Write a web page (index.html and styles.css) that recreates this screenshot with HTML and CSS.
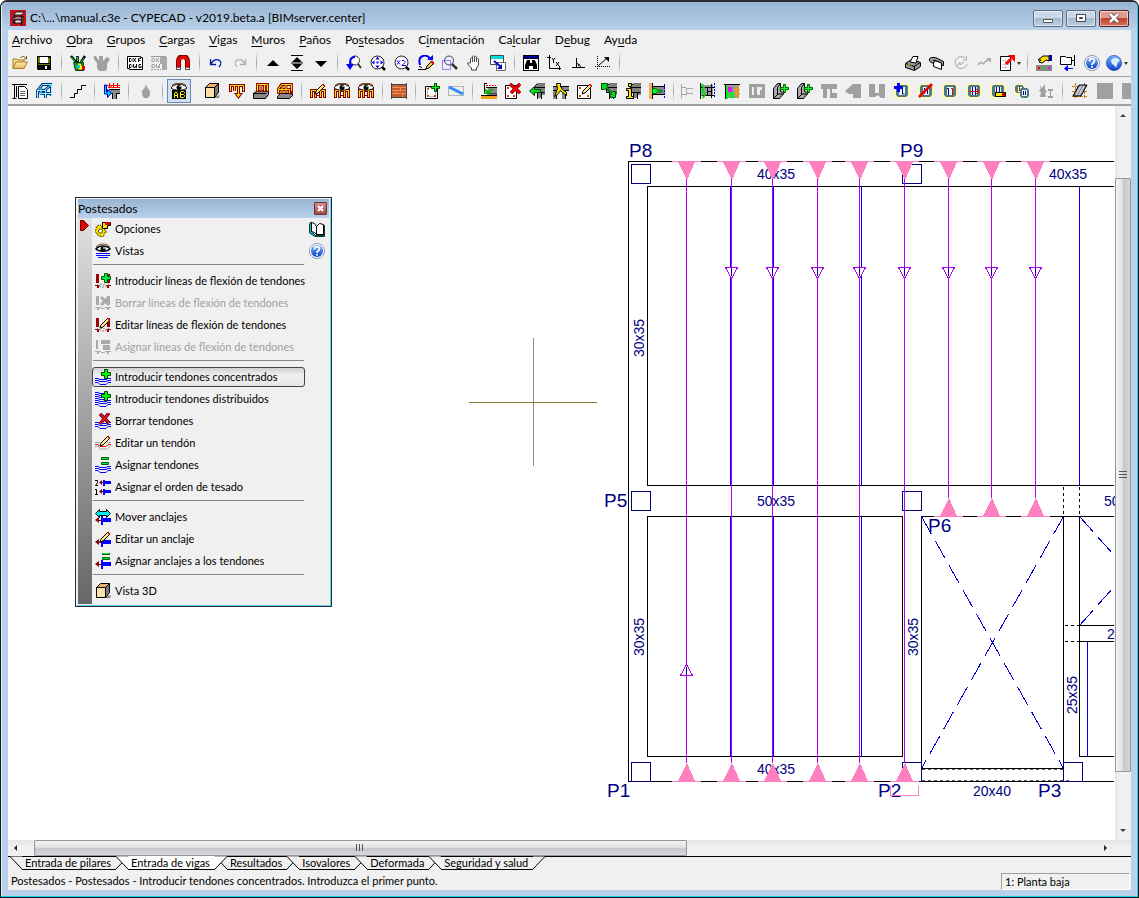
FILE: index.html
```html
<!DOCTYPE html>
<html lang="es">
<head>
<meta charset="utf-8">
<title>CYPECAD - v2019.beta.a</title>
<link rel="stylesheet" href="styles.css">
</head>
<body>
<svg class="sprite" aria-hidden="true">
  <defs>
    <linearGradient id="gBlue" x1="0" y1="0" x2="0" y2="1"><stop offset="0" stop-color="#7db4ff"/><stop offset="1" stop-color="#0a3fc8"/></linearGradient>
    <linearGradient id="gFolder" x1="0" y1="0" x2="0" y2="1"><stop offset="0" stop-color="#fff0b8"/><stop offset="1" stop-color="#e6b450"/></linearGradient>
    <g id="plus"><path d="M10.500 .5h3v3h3v3h-3v3h-3v-3h-3v-3h3z" fill="#0f0" stroke="#004000"/></g>
    <g id="pen"><path d="M5 11l1-3 7-7 2 2-7 7z" fill="#ffe680" stroke="#000"/><path d="M12 1h2v1h1v2h-1z" fill="#d00"/></g>
    <g id="claws"><path d="M0 6h16v9h-3v-2h-1v2H9v-2H7v2H4v-2H3v2H0z" fill="#8b0000"/><path d="M1 7h14v7h-1V8h-3v6h-1V8H6v6H5V8H2v6H1z" fill="#ffdc00"/><path d="M3 9h1v4H3zM7 9h2v3H7zM12 9h1v4h-1z" fill="#f0f0f0"/></g>
    <g id="eye"><path d="M0 5C3 0 13 0 16 5 12 8 4 8 0 5z" fill="#fff" stroke="#000"/><path d="M1 3C4-.5 12-.5 15 3" fill="none" stroke="#7a4a28" stroke-width="1.500"/><circle cx="8" cy="4.500" r="2.500" fill="#000"/><path d="M8 3h2v1H8z" fill="#5cc"/></g>
    <g id="beam"><path d="M5 4l3-2h8v10h-4v3H8V9H5z" fill="#808080"/><path d="M5 4.500h11M5.500 4.500v5h10M8.500 10v6M12.500 10v6M5 4l3-3h8" fill="none" stroke="#000"/></g>
    <g id="waves" fill="none" stroke="#00f"><path d="M0 9.500h3l2 1h6l2-1h3M0 11.500h3l2 1h6l2-1h3M0 13.500h3l2 2h6l2-2h3"/></g>
    <g id="anchor"><path d="M6 7h2v2h8v4H8v3H6z" fill="#00f"/><path d="M3 11h3v1H3z" fill="#8b0000"/><path d="M4 8v6l-4-3z" fill="#8b0000"/></g>
    <g id="equal"><path d="M7.500 .5h7v2h-7zM7.500 5.500h7v2h-7z" fill="#0e4" stroke="#006010"/></g>
    <g id="posts"><path d="M1 1h3v9H1zM12 1h3v9h-3zM2 12h2v3H2zM12 12h2v3h-2z" fill="#900"/><path d="M0 12.500h5M11 12.500h5" stroke="#900"/><path d="M2 11l4 3h4l4-3M5 11l3 1 3-1" fill="none" stroke="#888" stroke-dasharray="2 1"/></g>
    <g id="slab"><path d="M0 1h5v-1h6v1h5v13h-5v2H5v-1H0z" fill="#fff8b0"/><path d="M3 2h10l1 2v8l-2 2H4l-2-2V4z" fill="#4c7c7c"/><path d="M5 4h6v8H5z" fill="#eef4f4"/></g>

    <symbol id="i-app" viewBox="0 0 16 16"><path d="M0 0h16v16H0z" fill="#c41420"/><path d="M4 5l2-3h8l-2 3zM2 9l3-2h9l-3 2zM3 13l2-3h9l-3 3z" fill="#ddd" stroke="#111" stroke-width=".8"/><path d="M4.500 5v3M11.500 5v3M4.500 10v4M11.500 10v5" stroke="#111" stroke-width="1.500"/></symbol>
    <symbol id="i-open" viewBox="0 0 16 16"><path d="M1 13V4h4l1 1h6v2" fill="#f6d98a" stroke="#a87a1c"/><path d="M1 13.500L4 7h11.500L12 13.500z" fill="url(#gFolder)" stroke="#a87a1c"/><path d="M8 3c2-2 4-2 6 0M14.500 1v3H12" fill="none" stroke="#806020"/></symbol>
    <symbol id="i-save" viewBox="0 0 16 16"><path d="M1 1h14v14H2l-1-1z" fill="#000"/><path d="M2 2h2v6H2zM12 3h2v5h-2z" fill="#7a7a00"/><path d="M4 2h8v6H4zM9 11h2v3H9z" fill="#fff"/><path d="M2 9h12v1H2z" fill="#7a7a00"/></symbol>
    <symbol id="i-tools" viewBox="0 0 16 16"><path d="M3.500 7.500h10v8h-8z" fill="#0b2" stroke="#043"/><path d="M7 8h4l3 7H8z" fill="#ff0" stroke="#000" stroke-width=".7"/><path d="M1 1l5 6M7.500 1v6M15 1l-4 6" fill="none" stroke="#000" stroke-width="2.500"/><path d="M1.500 2l4 5M7.500 2v4M14 3l-3 4" stroke="#0d3"/><path d="M7 10h3v3H7z" fill="#0cf"/><path d="M12 11h3v4h-3z" fill="#d00"/></symbol>
    <symbol id="i-tools-off" viewBox="0 0 16 16"><path d="M0 1h2l3 5V1h4v5l4-4 3 2-3 5v5l-2 2H5l-2-3V8L0 4z" fill="#a0a0a0"/></symbol>
    <symbol id="i-dxf" viewBox="0 0 16 16"><path d="M.5 1.500h13v1h2v12H2.500v-1h-2z" fill="#fff" stroke="#000"/><path d="M2.500 7V3.500H4l1 1v1l-1 1H2.500M6 3l3 4M9 3L6 7M11.500 7V3.500H14M12 5.500h1.500M2.500 13V9.500H4l1 1v1l-1 1H2.500M6.500 9v3l1 1 1-2 1 2V9M14 9.500h-2v3h2V11" fill="none" stroke="#000"/></symbol>
    <symbol id="i-dxf-off" viewBox="0 0 16 16"><path d="M1 3.500h2l1 1-1 2H1zM5 3l3 4M8 3L5 7M9.500 7V3.500H12M1 9.500h2l1 1-1 2H1zM5.500 9v3l1 1 1-2 1 2V9M0 1.500h15" fill="none" stroke="#999"/><path d="M9 2h7v13h-5V9H9z" fill="#a8a8a8"/><path d="M0 14.500h10" stroke="#999" stroke-dasharray="2 1"/></symbol>
    <symbol id="i-magnet" viewBox="0 0 16 16"><path d="M3.500 15V6c0-6 9-6 9 0v9" fill="none" stroke="#700" stroke-width="5"/><path d="M3.500 15V6c0-5 9-5 9 0v9" fill="none" stroke="#f00000" stroke-width="3"/><path d="M1.500 12.500h4v2h-4zM10.500 12.500h4v2h-4z" fill="#fff" stroke="#555"/></symbol>
    <symbol id="i-undo" viewBox="0 0 16 16"><path d="M2.500 4v5.500H8M3 9c2-5 7-5 9-3s0 5-1 6" fill="none" stroke="#0018a8" stroke-width="1.300"/></symbol>
    <symbol id="i-redo" viewBox="0 0 16 16"><path d="M13.500 4v5.500H8M13 9C11 4 6 4 4 6s0 5 1 6" fill="none" stroke="#b0b0b0" stroke-width="1.300"/></symbol>
    <symbol id="i-up" viewBox="0 0 16 16"><path d="M2 11h12L8 5z" fill="#000"/></symbol>
    <symbol id="i-updown" viewBox="0 0 16 16"><path d="M2 .5h12M2 15.500h12M2 8h12" stroke="#000"/><path d="M3 7h10L8 2zM3 9h10l-5 5z" fill="#000"/></symbol>
    <symbol id="i-down" viewBox="0 0 16 16"><path d="M2 6h12l-6 6z" fill="#000"/></symbol>
    <symbol id="i-zoomprev" viewBox="0 0 16 16"><circle cx="9" cy="5.500" r="4.500" fill="#fff" stroke="#333"/><path d="M12 9l3 4" stroke="#333" stroke-width="2"/><path d="M9 2C4 2 4 6 4 10" fill="none" stroke="#00f" stroke-width="2"/><path d="M0 9h8l-4 6z" fill="#00f"/></symbol>
    <symbol id="i-zoomall" viewBox="0 0 16 16"><circle cx="7.500" cy="7.500" r="6.500" fill="#fff" stroke="#222"/><path d="M12 12l3 3" stroke="#000" stroke-width="2.500"/><path d="M7.500 1.500l2 3h-4zM7.500 13.500l2-3h-4zM1.500 7.500l3-2v4zM13.500 7.500l-3-2v4z" fill="#00f"/><path d="M6.500 6.500h2v2h-2z" fill="#00f"/></symbol>
    <symbol id="i-zoomx2" viewBox="0 0 16 16"><circle cx="7.500" cy="7.500" r="6.500" fill="#fff" stroke="#222"/><path d="M12 12l3 3" stroke="#000" stroke-width="2.500"/><path d="M3 5.500l3 4M6 5.500l-3 4M8 5.500h2l1 1v1l-3 3h4" fill="none" stroke="#00f"/></symbol>
    <symbol id="i-redraw" viewBox="0 0 16 16"><path d="M2 10C-1 0 9-2 12 4" fill="none" stroke="#00f" stroke-width="2"/><path d="M9 5h6V0z" fill="#00f"/><path d="M0 14.500h8M1 11.500l3 1" stroke="#000"/><path d="M8 14l1-3 5-5 2 2-5 5z" fill="#fc3" stroke="#000"/><path d="M13 6l3 3" stroke="#d00" stroke-width="2"/></symbol>
    <symbol id="i-zoomwin" viewBox="0 0 16 16"><circle cx="7" cy="5.500" r="4.500" fill="#eef" stroke="#444"/><path d="M10 9l5 5" stroke="#333" stroke-width="2.500"/><path d="M.5 5.500h8v9h-8z" fill="none" stroke="#22f" stroke-dasharray="1 1"/></symbol>
    <symbol id="i-hand" viewBox="0 0 16 16"><path d="M4.500 8V3.500q1-1.500 2 0V7 1.500q1-1.500 2 0V7 2q1-1.500 2 0v5-3q1-1.500 2 0v6l-2 3v2h-5v-2L1.500 9q0-2 2-1z" fill="#fff" stroke="#444"/></symbol>
    <symbol id="i-winchange" viewBox="0 0 16 16"><path d="M.5 .5h13v9H.5z" fill="#fff" stroke="#444"/><path d="M1 1h12v3H1z" fill="#0dd"/><path d="M6.500 7.500h9v8h-9z" fill="#fff" stroke="#666"/><path d="M4 6l7 6" stroke="#00c" stroke-width="2"/><path d="M12 9v5H7z" fill="#00c"/></symbol>
    <symbol id="i-find" viewBox="0 0 16 16"><path d="M0 0h16v16H0z" fill="#000"/><path d="M1 1h14v2H1z" fill="#0000a0"/><path d="M1 4h14v11H1z" fill="#fff"/><path d="M4 5h3v3h2V5h3l2 5v4h-4v-3H6v3H2v-4z" fill="#000"/></symbol>
    <symbol id="i-xy" viewBox="0 0 16 16"><path d="M2.500 0v13.500H14M0 2.500h4M12.500 11v4M5 3l1.500 2L8 3M6.500 5v3M9 7l3 4M12 7l-3 4" fill="none" stroke="#000"/></symbol>
    <symbol id="i-ortho" viewBox="0 0 16 16"><path d="M1 12.500h13M5.500 12V3M5.500 8.500q4 0 4 4" fill="none" stroke="#000"/><path d="M7 10h1v1H7z"/></symbol>
    <symbol id="i-axis" viewBox="0 0 16 16"><path d="M2.500 1v14M0 11.500h15" stroke="#000" stroke-dasharray="1 1"/><path d="M2 12L12 3" stroke="#000"/><path d="M9 2h5v5z"/></symbol>

    <symbol id="i-print" viewBox="0 0 16 16"><path d="M.5 8.500l6-4 9 3v4l-6 4-9-3z" fill="#999" stroke="#000"/><path d="M1 8.500l8 3 6-4M9.500 11v4" fill="none" stroke="#000"/><path d="M5 7l3-5.500h5L11 8z" fill="#fff" stroke="#000"/><path d="M3 9h2v1H3z" fill="#0f0"/><path d="M5 10h2v1H5z" fill="#f00"/></symbol>
    <symbol id="i-plot" viewBox="0 0 16 16"><path d="M4.500 5.500l8 2v7l-8-3z" fill="#fff" stroke="#000"/><path d="M.5 3.500l2-1h4l8 4v4h-2V8L5 5v3H3L.5 6z" fill="#999" stroke="#000"/></symbol>
    <symbol id="i-off1" viewBox="0 0 16 16"><path d="M12 3A6 6 0 1 0 14 9M13.500 1v4H10M4 11l3-4v3l4-3" fill="none" stroke="#aaa"/></symbol>
    <symbol id="i-off2" viewBox="0 0 16 16"><path d="M1 10q3-4 4-2t4-2l3-1" fill="none" stroke="#aaa" stroke-width="1.500"/><path d="M9 3h5v5z" fill="#aaa"/></symbol>
    <symbol id="i-export" viewBox="0 0 16 16"><path d="M1.500 1.500h10v14h-10z" fill="#fff" stroke="#000"/><path d="M3 5.500h7M3 9.500h7M3 12.500h7M6.500 4v10" stroke="#ccc"/><path d="M7 9l5-5" stroke="#f00" stroke-width="3"/><path d="M9 0h7v7z" fill="#f00"/></symbol>
    <symbol id="i-hands" viewBox="0 0 16 16"><path d="M2 5l5-4h6v5l-3-1-4 3-3-1 2-2z" fill="#ffe100" stroke="#000"/><path d="M13 0h3v6h-3z" fill="#00a"/><path d="M0 10h16v6H0z" fill="#888"/><path d="M2 12h2v2H2z" fill="#f00"/><path d="M7 12h2v2H7z" fill="#0e0"/><path d="M12 12h2v2h-2z" fill="#f0f"/></symbol>
    <symbol id="i-folderlink" viewBox="0 0 16 16"><path d="M.5 1.500h5l1 1h5v7H.5zM11 5.500h4M14.500 0v11" fill="#fff" stroke="#000"/><path d="M7 13.500h6" stroke="#00f"/><path d="M4 13.500L8 10v7z" fill="#00f"/></symbol>
    <symbol id="i-help" viewBox="0 0 16 16"><circle cx="8" cy="8" r="7.500" fill="#fff" stroke="#8a94b4"/><circle cx="8" cy="8" r="6" fill="url(#gBlue)"/><path d="M5.500 6.500c0-4 5-3.500 5-.8C10.500 8 8 7.500 8 10M8 11v1.800" fill="none" stroke="#fff" stroke-width="1.800"/></symbol>
    <symbol id="i-globe" viewBox="0 0 16 16"><circle cx="8" cy="8" r="7.600" fill="url(#gBlue)" stroke="#0b3a9a" stroke-width=".6"/><path d="M6 4c3-2 7-1 8 2l-2 1-2 6-2-3-2-1-1-3z" fill="#d7f0ff"/></symbol>

    <symbol id="i-sheets" viewBox="0 0 16 16"><path d="M0 1.500h15M2.500 2v13M.5 15.500h4M4.500 3v11" fill="none" stroke="#000"/><path d="M6.500 3.500h6l3 3v9h-9z" fill="#fff" stroke="#000"/><path d="M8 8.500h5M8 10.500h5M8 12.500h5" stroke="#666"/></symbol>
    <symbol id="i-frame3d" viewBox="0 0 16 16"><path d="M1.500 15V7.500l5-6h9V13M1.500 7.500h8V15M9 7l6-5M5 11.500V5M4 10.500h11" fill="none" stroke="#00308c" stroke-width="2.800"/><path d="M1.500 15V7.500l5-6h9V13M1.500 7.500h8V15M9 7l6-5M5 11.500V5M4 10.500h11" fill="none" stroke="#8ff" stroke-width="1"/></symbol>
    <symbol id="i-stair" viewBox="0 0 16 16"><path d="M0 14.500h4.500v-4h3v-4h4v-4H16" fill="none" stroke="#000"/></symbol>
    <symbol id="i-loads" viewBox="0 0 16 16"><path d="M5 7h11v4h-4v5H8v-5H5z" fill="#888"/><path d="M2 2.500h14M5.500 0v4M9.500 0v4M13.500 0v4" stroke="#f00"/><path d="M4 4.500h3v-1l2 1.500M9 4.500h7" stroke="#f00" fill="none"/><path d="M5 6.500h11M8.500 11v5M12.500 11v5M5 10.500h4M12 10.500h4" stroke="#000"/><path d="M.5 2v9h3v3.500l4-4.500-4-3.500V9H2.500V2z" fill="#0cf" stroke="#00c"/></symbol>
    <symbol id="i-drop" viewBox="0 0 16 16"><path d="M8 1l1 3 3 4v4l-2 3H6l-2-3V8l3-4z" fill="#a0a0a0"/></symbol>
    <symbol id="i-eyeab" viewBox="0 0 16 16"><use href="#eye"/><path d="M1 7h14v9H1z" fill="#000"/><path d="M3.500 15v-4l1-2h1l1 2v4M4 12.500h3M9.500 9v5.500h3l1-1v-1l-1-1h-3M10 8.500h2.500l1 1v1" fill="none" stroke="#ff0"/></symbol>
    <symbol id="i-box" viewBox="0 0 16 16"><path d="M3 15h12l1-3-3 1z" fill="#888"/><path d="M1.500 4.500h9v10h-9z" fill="#fbe0a8" stroke="#000"/><path d="M1.500 4.500l4-4h9l-4 4z" fill="#f0b070" stroke="#000"/><path d="M10.500 4.500l4-4v9l-4 5z" fill="#777" stroke="#000"/></symbol>
    <symbol id="i-ydown" viewBox="0 0 16 16"><path d="M1.500 9V2.500h13V9M5.500 8V3M9.500 3v10" fill="none" stroke="#8b0000" stroke-width="3"/><path d="M5 10h9l-4.500 6z" fill="#8b0000"/><path d="M1.500 8V2.500h13V8M5.500 8V3M9.500 3v11" fill="none" stroke="#ffdc00"/><path d="M7 11h5l-2.500 3z" fill="#ffdc00"/></symbol>
    <symbol id="i-ybeam" viewBox="0 0 16 16"><path d="M.5 10.500l4-3h11v4l-3 4H.5z" fill="#888" stroke="#000"/><path d="M0 10.500h13" stroke="#000"/><path d="M4.500 9V1.500h10V9M8 2v7M11.500 2v7" fill="none" stroke="#8b0000" stroke-width="2.800"/><path d="M4.500 8V1.500h10V8M8 2v6M11.500 2v6" fill="none" stroke="#ffdc00"/></symbol>
    <symbol id="i-yslab" viewBox="0 0 16 16"><path d="M.5 13.500l3-3h12v2l-3 3H.5z" fill="#888" stroke="#000"/><path d="M1.500 11V6l3-4.500h10V9l-2 2M1 6.500h11.500V11M5 11V3M9 10V2" fill="none" stroke="#8b0000" stroke-width="2.800"/><path d="M1.500 10V6l3-4.500h10V8M1 6.500h11.500V10M5 10V3M9 10V2" fill="none" stroke="#ffdc00"/></symbol>
    <symbol id="i-yedit" viewBox="0 0 16 16"><use href="#claws"/><use href="#pen"/></symbol>
    <symbol id="i-yeye" viewBox="0 0 16 16"><use href="#claws"/><use href="#eye"/></symbol>
    <symbol id="i-wall" viewBox="0 0 16 16"><path d="M1 1h14v14H1z" fill="#c85a28"/><path d="M1 4.500h14M1 7.500h14M1 10.500h14M4.500 2v3M9.500 5v3M5.500 8v3M11.500 11v3" stroke="#f09060"/><path d="M.5 0v16M15.500 0v16M1 1.500h14M1 14.500h14" stroke="#444"/></symbol>
    <symbol id="i-newpanel" viewBox="0 0 16 16"><path d="M1.500 3.500h12v12h-12z" fill="#fff" stroke="#000"/><path d="M3 5h2v2H3zM3 12h2v2H3zM10 12h2v2h-2z" fill="#d40"/><path d="M4 4.500h6M4 13.500h6M3.500 6v6M11.500 9v3" stroke="#bbb"/><path d="M10.500 .5h2v3h3v2h-3v3h-2v-3h-3v-2h3z" fill="#0f0" stroke="#040"/></symbol>
    <symbol id="i-line" viewBox="0 0 16 16"><path d="M.5 3.500h15v9H.5z" fill="none" stroke="#777" stroke-dasharray="1 1"/><path d="M1 4l14 7" stroke="#2a8cff" stroke-width="3"/></symbol>
    <symbol id="i-b1" viewBox="0 0 16 16"><path d="M7 5h9v6H5z" fill="#888"/><path d="M0 13h16v3H0z" fill="#f0a020"/><path d="M3 .5h3M5 4.500h11M3.500 1v8l3 2h9.500M0 12.500h16" fill="none" stroke="#000"/><path d="M5 2.500h10" stroke="#f00" stroke-dasharray="2 1"/><path d="M4 6l3 4M11 6l-4 4H3" fill="none" stroke="#0b0" stroke-width="2"/></symbol>
    <symbol id="i-b2" viewBox="0 0 16 16"><path d="M.5 2.500h11v13H.5z" fill="#fff" stroke="#000"/><path d="M2 4h2v2H2zM2 12h2v2H2zM8 12h2v2H8z" fill="#d40"/><path d="M5 1l10 9M15 1L6 10" stroke="#700" stroke-width="3.500"/><path d="M5 1l10 9M15 1L6 10" stroke="#f00" stroke-width="2"/></symbol>
    <symbol id="i-b3" viewBox="0 0 16 16"><use href="#beam"/><path d="M.5 8l5-4.500v3h6v3h-6v3z" fill="#0d2" stroke="#040"/></symbol>
    <symbol id="i-b4" viewBox="0 0 16 16"><path d="M0 4h16v4h-4v8H9V9L6 8 3 16H0z" fill="#888"/><path d="M0 3.500h16M0 7.500h4M12 7.500h4M3.500 12v4M12.500 8v8" stroke="#000"/><path d="M3.500 .5h4v3l2 3 4 3v3l-4-3-2-2-3 4-3 2 3-8z" fill="#ffe600" stroke="#000"/></symbol>
    <symbol id="i-b5" viewBox="0 0 16 16"><path d="M.5 2.500h13v13H.5z" fill="#fff" stroke="#000"/><path d="M2 4h2v2H2zM2 12h2v2H2zM10 12h2v2h-2z" fill="#d40"/><use href="#pen"/></symbol>
    <symbol id="i-b6" viewBox="0 0 16 16"><use href="#beam"/><path d="M.5 .5h6v2l-1 1 5 6 1-1h3v6h-5v-2l1-1-5-6-2 1h-3z" fill="#0d2" stroke="#040"/></symbol>
    <symbol id="i-b7" viewBox="0 0 16 16"><use href="#beam"/><path d="M3.500 .5h3v3h-3zM1.500 5.500h5v8h2v2h-7v-2h2v-6h-2z" fill="#ffe600" stroke="#000"/></symbol>
    <symbol id="i-b8" viewBox="0 0 16 16"><path d="M4 4h12v8H4z" fill="#888"/><path d="M4 3.500h12M4 11.500h12" stroke="#000"/><path d="M15.500 1v14" stroke="#00f" stroke-dasharray="2 1"/><path d="M0 0h3v16H0z" fill="#f0b060"/><path d="M3.500 0v16" stroke="#000"/><path d="M3.500 5.500h3l2 1.500h4v2h-4l-2 1.500h-3z" fill="#0f2" stroke="#060"/></symbol>
    <symbol id="i-c1" viewBox="0 0 16 16"><path d="M3.500 1v14M4 4.500h4M8 11.500H4M8.500 5v7M9 5.500h6M9 10.500h6" fill="none" stroke="#a8a8a8"/></symbol>
    <symbol id="i-c2" viewBox="0 0 16 16"><path d="M2 2h12v11H2z" fill="#999"/><path d="M1.500 0v16M8.500 5v8M12.500 1v14M2 4.500h14M8 8.500h5M3 12.500h13" stroke="#000"/><path d="M3 1l2 4-2 3 3 3-2 4" fill="none" stroke="#0d2" stroke-width="2"/><path d="M15.500 0v15" stroke="#00f" stroke-dasharray="2 1"/></symbol>
    <symbol id="i-c3" viewBox="0 0 16 16"><path d="M1 1h14v14H1z" fill="#999"/><path d="M0 1.500h16M1.500 1v15" stroke="#000"/><path d="M4 4h4v5H4z" fill="#f0f"/><path d="M3 3v13M6 10h3v4H6z" fill="none" stroke="#0e2" stroke-width="2"/><path d="M12.500 3v12M10 6.500h6M10 10.500h6" stroke="#ff9a00" stroke-width="1.500"/></symbol>
    <symbol id="i-g1" viewBox="0 0 16 16"><path d="M0 1h16v14H0z" fill="#a0a0a0"/><path d="M3 4h2v8H3zM8 4h5v3h-2v5H8z" fill="#f0f0f0"/></symbol>
    <symbol id="i-d1" viewBox="0 0 16 16"><path d="M.5 5.500l4-5h3v8l4 1-5 6h-6z" fill="#aaa" stroke="#000"/><path d="M4.500 12V4.500l3-4M1 15l4-4h6" fill="none" stroke="#000"/><path d="M10.500 1.500h2v3h3v2h-3v3h-2v-3h-3v-2h3z" fill="#0f2" stroke="#060"/></symbol>
    <symbol id="i-g2" viewBox="0 0 16 16"><path d="M0 1h16v5h-5v4h5v5H9V6H6v9H2V6H0z" fill="#a0a0a0"/></symbol>
    <symbol id="i-g3" viewBox="0 0 16 16"><path d="M0 8l8-7h8v14H8V11H4z" fill="#a0a0a0"/></symbol>
    <symbol id="i-g4" viewBox="0 0 16 16"><path d="M0 1h6v9h4V1h6v14h-4l-3-3-3 2H0z" fill="#a0a0a0"/></symbol>
    <symbol id="i-s1" viewBox="0 0 16 16"><use href="#slab"/><path d="M3 0h3v3h3v3H6v3H3V6H0V3h3z" fill="#00f"/><path d="M8.500 5v6h2" fill="none" stroke="#00a"/></symbol>
    <symbol id="i-s2" viewBox="0 0 16 16"><use href="#slab"/><path d="M6.500 5v6M9.500 5v6" fill="none" stroke="#00a"/><path d="M1 14L14 1" stroke="#e00" stroke-width="2.500"/></symbol>
    <symbol id="i-s3" viewBox="0 0 16 16"><use href="#slab"/><path d="M5 5.500h1.500V12" fill="none" stroke="#00a"/><path d="M9 5.500h1.500V12" fill="none" stroke="#e00"/></symbol>
    <symbol id="i-s4" viewBox="0 0 16 16"><use href="#slab"/><path d="M6.500 4v8M9.500 4v8" fill="none" stroke="#00a"/><path d="M4 8.500h8M10 6l3 2.500L10 11" fill="none" stroke="#e00"/></symbol>
    <symbol id="i-s5" viewBox="0 0 16 16"><use href="#slab"/><path d="M6.500 4v5M9.500 4v5" stroke="#00a"/><path d="M5.500 9.500h10v4h-10z" fill="#ffe600" stroke="#000"/><path d="M12 10h3v3h-3z" fill="#e00"/></symbol>
    <symbol id="i-s6" viewBox="0 0 16 16"><path d="M0 1h11v11H0z" fill="#fff8b0"/><path d="M2 2h6l2 2v6H3L1 8V4z" fill="#4c7c7c"/><path d="M4 4h4v5H4z" fill="#fff"/><path d="M7 5h6l2 2v6l-2 2H8l-2-2V7z" fill="#4c7c7c"/><path d="M8 7h5v6H8z" fill="#eef4f4"/><path d="M5.500 4v4" stroke="#e00"/><path d="M9.500 8v4M11.500 8v4" stroke="#00a"/></symbol>
    <symbol id="i-g5" viewBox="0 0 16 16"><path d="M1 1l3 4 3-4v5l2 3-2 1 1 4H2l1-5-2-1 2-3zM10 6h5v2h-2v5h2v2h-5v-2h2V8h-2z" fill="#a0a0a0"/></symbol>
    <symbol id="i-iso" viewBox="0 0 16 16"><path d="M0 3.500h16M0 8.500h16M0 13.500h16M3.500 0v16M12.500 0v16" stroke="#c07818" stroke-dasharray="3 1"/><path d="M1 13L7 2h8l-6 11z" fill="#889" stroke="#000"/><path d="M4 12l5-9M7 12l5-9" stroke="#cfd6e8" stroke-width="1.500"/></symbol>
    <symbol id="i-g6" viewBox="0 0 16 16"><path d="M0 0h16v16H0z" fill="#a0a0a0"/></symbol>

    <symbol id="i-options" viewBox="0 0 16 16"><path d="M1 6h2V4h3v2h3v3h2v3H9v3H7v1H5v-2H2v-2H0V9h1z" fill="#ffe600" stroke="#5a4a00" stroke-dasharray="2 1"/><circle cx="5.500" cy="10" r="2" fill="#fff" stroke="#5a4a00"/><path d="M7.500 1.500h8v3h-3v3h-5z" fill="#ffe600" stroke="#000"/><path d="M10 1h5v3h-5z" fill="#e00"/></symbol>
    <symbol id="i-views" viewBox="0 0 16 16"><path d="M1 10.500h14M1 12.500h14M3 14.500h10" stroke="#00f"/><path d="M1 6C4 2 12 2 15 6 12 9 4 9 1 6z" fill="#fff" stroke="#000" stroke-width="1.500"/><path d="M1 4C4 0 12 0 15 4" fill="none" stroke="#7a4a20"/><circle cx="8" cy="6" r="2.500" fill="#000"/><path d="M8 4h2v2H8z" fill="#6aa"/></symbol>
    <symbol id="i-lplus" viewBox="0 0 16 16"><use href="#posts"/><path d="M9.500 .5h3v3h3v3h-3v3h-3v-3h-3v-3h3z" fill="#0e4" stroke="#050"/></symbol>
    <symbol id="i-loff" viewBox="0 0 16 16"><path d="M1 1h3v9H1zM12 1h3v9h-3zM2 12h2v3H2zM12 12h2v3h-2z" fill="#aaa"/><path d="M0 12.500h5l2 1h2l2-1h5" fill="none" stroke="#aaa"/><path d="M6 2l8 8M14 2L6 10" stroke="#aaa" stroke-width="3"/></symbol>
    <symbol id="i-ledit" viewBox="0 0 16 16"><use href="#posts"/><use href="#pen"/></symbol>
    <symbol id="i-lassign" viewBox="0 0 16 16"><path d="M1 1h2v9H1zM6 1h9v4H6zM8 6h7v5H8zM2 12h2v3H2zM12 12h2v3h-2z" fill="#aaa"/><path d="M0 12.500h5l2 1h2l2-1h5" fill="none" stroke="#aaa"/></symbol>
    <symbol id="i-tplus" viewBox="0 0 16 16"><use href="#waves"/><use href="#plus" x="-1"/></symbol>
    <symbol id="i-tdist" viewBox="0 0 16 16"><use href="#waves"/><path d="M0 1.500h3l2 1h8M0 3.500h3l2 1h8M0 5.500h3l2 1h8M0 7.500h3l2 1h8" fill="none" stroke="#00f"/><use href="#plus" x="-1"/></symbol>
    <symbol id="i-tdel" viewBox="0 0 16 16"><use href="#waves"/><path d="M5 1l9 9M14 0L5 11" stroke="#400" stroke-width="3.500"/><path d="M5 1l9 9M14 0L5 11" stroke="#e01020" stroke-width="2"/></symbol>
    <symbol id="i-tedit" viewBox="0 0 16 16"><path d="M0 9.500h3l2 2h6l2-2h3" fill="none" stroke="#f00"/><path d="M0 12l3-1 2 3h7l4-3M0 7.500h5M12 7.500h4" fill="none" stroke="#aaa"/><use href="#pen"/></symbol>
    <symbol id="i-tassign" viewBox="0 0 16 16"><use href="#waves"/><use href="#equal" x="-1"/></symbol>
    <symbol id="i-order" viewBox="0 0 16 16"><path d="M0 1.500h2.500v2L.5 6.500H3M0 10.500h1.500V15M0 15.500h3" fill="none" stroke="#000"/><path d="M6 3.500h3M6 12.500h3" stroke="#8b0000"/><path d="M7 1v5L4 3.500zM7 10v5l-3-2.500z" fill="#8b0000"/><path d="M8 1h2v1h6v3h-6v2H8zM8 10h2v1h6v3h-6v2H8z" fill="#00f"/></symbol>
    <symbol id="i-amove" viewBox="0 0 16 16"><use href="#anchor"/><path d="M.5 4.500l4-4v2h7v-2l4 4-4 4v-2h-7v2z" fill="#0ee" stroke="#000"/></symbol>
    <symbol id="i-aedit" viewBox="0 0 16 16"><use href="#anchor"/><use href="#pen"/></symbol>
    <symbol id="i-aassign" viewBox="0 0 16 16"><use href="#anchor"/><use href="#equal" y="-1"/></symbol>
    <symbol id="i-book" viewBox="0 0 16 16"><path d="M.5 2.500L2.500 1v10l4 3.500h8V4.500h1v11H6L.5 12z" fill="#0cc" stroke="#003c3c"/><path d="M2.500 1.500l3 1 2 3v8l-2-2-3-1zM7.500 5.500l3-3 4 1v10h-7z" fill="#fff" stroke="#000"/></symbol>
    <g id="anchorDown" fill="#ff80c0"><path d="M-9 0H9L1 18H0z" transform="translate(.5 0)"/><path d="M-14 0h29v1h-29z"/></g>
    <g id="anchorUp" fill="#ff80c0"><path d="M-9 0H9L1-18H0z" transform="translate(.5 0)"/><path d="M-14-1h29v1h-29z"/></g>
    <g id="arrow"><path d="M-5.500 .5h12l-6 11z" fill="#fff" stroke="#b400f0"/><path d="M.5 1v8" stroke="#0000a0"/></g>
  </defs>
</svg>

<div class="window">
  <header class="titlebar">
    <svg class="icon"><use href="#i-app"/></svg>
    <h1 class="title">C:\...\manual.c3e - CYPECAD - v2019.beta.a [BIMserver.center]</h1>
    <div class="controls">
      <button class="control" aria-label="Minimizar"><svg width="12" height="12"><path d="M1.500 7.500h9v3h-9z" fill="#fff" stroke="#555"/></svg></button>
      <button class="control" aria-label="Maximizar"><svg width="12" height="12"><path d="M1.500 2.500h9v7h-9z" fill="#fff" stroke="#445"/><path d="M4.500 5.500h3v1h-3z" fill="#8ab" stroke="#445"/></svg></button>
      <button class="control control-close" aria-label="Cerrar"><svg width="12" height="12"><path d="M2 2l8 8M10 2l-8 8" stroke="#544" stroke-width="4"/><path d="M2 2l8 8M10 2l-8 8" stroke="#fff" stroke-width="2.500"/></svg></button>
    </div>
  </header>

  <div class="client">
    <nav class="menubar">
      <button class="menu"><u>A</u>rchivo</button><button class="menu"><u>O</u>bra</button><button class="menu"><u>G</u>rupos</button><button class="menu"><u>C</u>argas</button><button class="menu"><u>V</u>igas</button><button class="menu"><u>M</u>uros</button><button class="menu"><u>P</u>años</button><button class="menu">Po<u>s</u>tesados</button><button class="menu">C<u>i</u>mentación</button><button class="menu">Ca<u>l</u>cular</button><button class="menu">D<u>e</u>bug</button><button class="menu">Ay<u>u</u>da</button>
    </nav>

    <div class="toolbar toolbar-main">
      <button class="tool" aria-label="Abrir"><svg class="icon"><use href="#i-open"/></svg></button>
      <button class="tool" aria-label="Guardar"><svg class="icon"><use href="#i-save"/></svg></button>
      <span class="sep"></span>
      <button class="tool" aria-label="Herramientas"><svg class="icon"><use href="#i-tools"/></svg></button>
      <button class="tool" aria-label="Recursos" disabled><svg class="icon"><use href="#i-tools-off"/></svg></button>
      <span class="sep"></span>
      <button class="tool" aria-label="Plantillas DXF"><svg class="icon"><use href="#i-dxf"/></svg></button>
      <button class="tool" aria-label="Vistas de plantillas" disabled><svg class="icon"><use href="#i-dxf-off"/></svg></button>
      <button class="tool" aria-label="Captura"><svg class="icon"><use href="#i-magnet"/></svg></button>
      <span class="sep"></span>
      <button class="tool" aria-label="Deshacer"><svg class="icon"><use href="#i-undo"/></svg></button>
      <button class="tool" aria-label="Rehacer" disabled><svg class="icon"><use href="#i-redo"/></svg></button>
      <span class="sep"></span>
      <button class="tool" aria-label="Subir grupo"><svg class="icon"><use href="#i-up"/></svg></button>
      <button class="tool" aria-label="Ir a grupo"><svg class="icon"><use href="#i-updown"/></svg></button>
      <button class="tool" aria-label="Bajar grupo"><svg class="icon"><use href="#i-down"/></svg></button>
      <span class="sep"></span>
      <button class="tool" aria-label="Vista previa"><svg class="icon"><use href="#i-zoomprev"/></svg></button>
      <button class="tool" aria-label="Ver todo"><svg class="icon"><use href="#i-zoomall"/></svg></button>
      <button class="tool" aria-label="Zoom doble"><svg class="icon"><use href="#i-zoomx2"/></svg></button>
      <button class="tool" aria-label="Redibujar"><svg class="icon"><use href="#i-redraw"/></svg></button>
      <button class="tool" aria-label="Marcar zoom"><svg class="icon"><use href="#i-zoomwin"/></svg></button>
      <button class="tool" aria-label="Mover imagen"><svg class="icon"><use href="#i-hand"/></svg></button>
      <button class="tool" aria-label="Ventana"><svg class="icon"><use href="#i-winchange"/></svg></button>
      <span class="sep"></span>
      <button class="tool" aria-label="Buscar"><svg class="icon"><use href="#i-find"/></svg></button>
      <button class="tool" aria-label="Coordenadas"><svg class="icon"><use href="#i-xy"/></svg></button>
      <button class="tool" aria-label="Ortogonal"><svg class="icon"><use href="#i-ortho"/></svg></button>
      <button class="tool" aria-label="Referencia"><svg class="icon"><use href="#i-axis"/></svg></button>
      <span class="sep"></span>
      <span class="spring"></span>
      <button class="tool" aria-label="Imprimir"><svg class="icon"><use href="#i-print"/></svg></button>
      <button class="tool" aria-label="Planos"><svg class="icon"><use href="#i-plot"/></svg></button>
      <button class="tool" aria-label="Regenerar" disabled><svg class="icon"><use href="#i-off1"/></svg></button>
      <button class="tool" aria-label="Actualizar" disabled><svg class="icon"><use href="#i-off2"/></svg></button>
      <button class="tool tool-drop" aria-label="Exportar"><svg class="icon"><use href="#i-export"/></svg></button>
      <span class="sep"></span>
      <button class="tool" aria-label="Configuración"><svg class="icon"><use href="#i-hands"/></svg></button>
      <button class="tool" aria-label="Directorio"><svg class="icon"><use href="#i-folderlink"/></svg></button>
      <button class="tool" aria-label="Ayuda"><svg class="icon"><use href="#i-help"/></svg></button>
      <button class="tool tool-drop" aria-label="Internet"><svg class="icon"><use href="#i-globe"/></svg></button>
    </div>

    <div class="toolbar toolbar-beams">
      <button class="tool" aria-label="Datos"><svg class="icon"><use href="#i-sheets"/></svg></button>
      <button class="tool" aria-label="Estructura 3D"><svg class="icon"><use href="#i-frame3d"/></svg></button>
      <span class="sep"></span>
      <button class="tool" aria-label="Escaleras"><svg class="icon"><use href="#i-stair"/></svg></button>
      <span class="sep"></span>
      <button class="tool tool-wide" aria-label="Cargas"><svg class="icon"><use href="#i-loads"/></svg></button>
      <span class="sep"></span>
      <button class="tool tool-wide" aria-label="Incendio" disabled><svg class="icon"><use href="#i-drop"/></svg></button>
      <span class="sep"></span>
      <button class="tool tool-on" aria-label="Ver textos" aria-pressed="true"><svg class="icon"><use href="#i-eyeab"/></svg></button>
      <span class="sep sep-blank"></span>
      <button class="tool" aria-label="Vista 3D"><svg class="icon"><use href="#i-box"/></svg></button>
      <button class="tool tool-wide" aria-label="Carga puntual"><svg class="icon"><use href="#i-ydown"/></svg></button>
      <button class="tool" aria-label="Carga lineal"><svg class="icon"><use href="#i-ybeam"/></svg></button>
      <button class="tool" aria-label="Carga superficial"><svg class="icon"><use href="#i-yslab"/></svg></button>
      <span class="sep"></span>
      <button class="tool" aria-label="Editar cargas"><svg class="icon"><use href="#i-yedit"/></svg></button>
      <button class="tool" aria-label="Ver cargas"><svg class="icon"><use href="#i-yeye"/></svg></button>
      <button class="tool" aria-label="Cargas visibles"><svg class="icon"><use href="#i-yeye"/></svg></button>
      <span class="sep"></span>
      <button class="tool" aria-label="Muros"><svg class="icon"><use href="#i-wall"/></svg></button>
      <span class="sep"></span>
      <button class="tool" aria-label="Nuevo paño"><svg class="icon"><use href="#i-newpanel"/></svg></button>
      <button class="tool" aria-label="Línea"><svg class="icon"><use href="#i-line"/></svg></button>
      <span class="sep"></span>
      <button class="tool" aria-label="Entrar viga"><svg class="icon"><use href="#i-b1"/></svg></button>
      <button class="tool" aria-label="Borrar viga"><svg class="icon"><use href="#i-b2"/></svg></button>
      <button class="tool" aria-label="Prolongar viga"><svg class="icon"><use href="#i-b3"/></svg></button>
      <button class="tool" aria-label="Ajustar viga"><svg class="icon"><use href="#i-b4"/></svg></button>
      <button class="tool" aria-label="Editar viga"><svg class="icon"><use href="#i-b5"/></svg></button>
      <button class="tool" aria-label="Mover viga"><svg class="icon"><use href="#i-b6"/></svg></button>
      <button class="tool" aria-label="Información"><svg class="icon"><use href="#i-b7"/></svg></button>
      <button class="tool" aria-label="Empotrar"><svg class="icon"><use href="#i-b8"/></svg></button>
      <span class="sep"></span>
      <button class="tool tool-narrow" aria-label="Articular" disabled><svg class="icon"><use href="#i-c1"/></svg></button>
      <button class="tool tool-wide" aria-label="Desconectar"><svg class="icon"><use href="#i-c2"/></svg></button>
      <button class="tool tool-wide" aria-label="Asignar"><svg class="icon"><use href="#i-c3"/></svg></button>
      <button class="tool tool-wide" aria-label="Alinear" disabled><svg class="icon"><use href="#i-g1"/></svg></button>
      <button class="tool" aria-label="Viga inclinada"><svg class="icon"><use href="#i-d1"/></svg></button>
      <button class="tool" aria-label="Viga común"><svg class="icon"><use href="#i-d1"/></svg></button>
      <button class="tool" aria-label="Ménsula" disabled><svg class="icon"><use href="#i-g2"/></svg></button>
      <button class="tool" aria-label="Cartela" disabled><svg class="icon"><use href="#i-g3"/></svg></button>
      <button class="tool" aria-label="Hueco" disabled><svg class="icon"><use href="#i-g4"/></svg></button>
      <button class="tool tool-wide" aria-label="Introducir momento"><svg class="icon"><use href="#i-s1"/></svg></button>
      <button class="tool" aria-label="Borrar momento"><svg class="icon"><use href="#i-s2"/></svg></button>
      <button class="tool" aria-label="Numerar"><svg class="icon"><use href="#i-s3"/></svg></button>
      <button class="tool" aria-label="Desplazar"><svg class="icon"><use href="#i-s4"/></svg></button>
      <button class="tool" aria-label="Modificar"><svg class="icon"><use href="#i-s5"/></svg></button>
      <button class="tool" aria-label="Copiar"><svg class="icon"><use href="#i-s6"/></svg></button>
      <button class="tool" aria-label="Errores" disabled><svg class="icon"><use href="#i-g5"/></svg></button>
      <span class="sep"></span>
      <button class="tool tool-wide" aria-label="Losa"><svg class="icon"><use href="#i-iso"/></svg></button>
      <button class="tool tool-wide" aria-label="Reticular" disabled><svg class="icon"><use href="#i-g6"/></svg></button>
      <button class="tool tool-wide" aria-label="Armado" disabled><svg class="icon"><use href="#i-g6"/></svg></button>
    </div>

    <main class="workspace">
      <div class="canvas">
        <svg class="plan" role="img" aria-label="Planta baja">
          <g transform="translate(-8 -106)">
            <g stroke="#000" fill="none">
              <path d="M1114 161.500H628.500v620H1114"/>
              <path d="M1114 186.500H647.500v299H1114M647.500 516.500h255v240h-255z"/>
              <path d="M921.500 781v-264.500H1114M1063.500 516v252M1079.500 516v240.500H1114M1079 625.500h35M1079 641.500h35M921 768.500h142"/>
              <path d="M1063.500 487v29M1079.500 487v29M1065 625.500h14M1065 641.500h14" stroke-dasharray="3 3"/>
              <path d="M922 769.500h141M922 780.500h150" stroke="#555" stroke-dasharray="3 3"/>
            </g>
            <path d="M730.500 187v298M773.500 187v298M861.500 187v298M1079.500 187v298M730.500 517v239M773.500 517v239M861.500 517v239M1087.500 642v114" stroke="#0000ff"/>
            <g stroke="#0000d0" stroke-dasharray="20 8" fill="none">
              <path d="M921.500 516.500l142 252M1063.500 516.500l-142 252M1079.500 516.500l42 47M1079.500 625.500l42-47"/>
            </g>
            <path d="M631.500 164.500h19v19h-19zM902.500 164.500h19v19h-19zM631.500 491.500h19v19h-19zM902.500 491.500h19v19h-19zM631.500 762.500h19v19h-19zM902.500 762.500h19v19h-19zM1063.500 762.500h19v19h-19z" fill="none" stroke="#000080"/>
            <g class="dim">
              <text x="757" y="179">40x35</text><text x="1049" y="179">40x35</text>
              <text x="757" y="506">50x35</text><text x="1104" y="506">50x35</text>
              <text x="1107" y="639">20x35</text>
              <text x="757" y="774">40x35</text><text x="973" y="796">20x40</text>
              <text transform="translate(644 357) rotate(-90)">30x35</text>
              <text transform="translate(644 656) rotate(-90)">30x35</text>
              <text transform="translate(918 656) rotate(-90)">30x35</text>
              <text transform="translate(1077 714) rotate(-90)">25x35</text>
            </g>
            <g class="pillar">
              <text x="629" y="157">P8</text><text x="900" y="157">P9</text><text x="604" y="507">P5</text><text x="928" y="532">P6</text>
              <text x="607" y="797">P1</text><text x="878" y="797">P2</text><text x="1038" y="797">P3</text>
            </g>
            <path d="M686.500 179v584M731.500 179v584M772.500 179v584M817.500 179v584M859.500 179v584M904.500 179v584M948.500 179v319M991.500 179v319M1035.500 179v319" stroke="#b400f0"/>
            <use href="#anchorDown" x="686" y="161"/><use href="#anchorDown" x="731" y="161"/><use href="#anchorDown" x="772" y="161"/><use href="#anchorDown" x="817" y="161"/><use href="#anchorDown" x="859" y="161"/><use href="#anchorDown" x="904" y="161"/><use href="#anchorDown" x="948" y="161"/><use href="#anchorDown" x="991" y="161"/><use href="#anchorDown" x="1035" y="161"/>
            <use href="#anchorUp" x="686" y="782"/><use href="#anchorUp" x="731" y="782"/><use href="#anchorUp" x="772" y="782"/><use href="#anchorUp" x="817" y="782"/><use href="#anchorUp" x="859" y="782"/><use href="#anchorUp" x="904" y="782"/><use href="#anchorUp" x="948" y="517"/><use href="#anchorUp" x="991" y="517"/><use href="#anchorUp" x="1035" y="517"/>
            <use href="#arrow" x="731" y="267"/><use href="#arrow" x="772" y="267"/><use href="#arrow" x="817" y="267"/><use href="#arrow" x="859" y="267"/><use href="#arrow" x="904" y="267"/><use href="#arrow" x="948" y="267"/><use href="#arrow" x="991" y="267"/><use href="#arrow" x="1035" y="267"/>
            <path d="M680.500 675.500h12l-6-11z" fill="#fff" stroke="#b400f0"/><path d="M686.500 667v8" stroke="#0000a0"/>
            <path d="M890.500 786v9.500h28V786" fill="none" stroke="#ff80c0"/>
            <path d="M533.500 338v128" stroke="#8c8c8c"/><path d="M469 402.500h128" stroke="#8c7a3c"/>
          </g>
        </svg>

        <section class="palette" aria-label="Postesados">
          <header class="palette-title"><h2>Postesados</h2><button class="palette-close" aria-label="Cerrar"><svg width="7" height="7"><path d="M1 1l5 5M6 1L1 6" stroke="#fff" stroke-width="2"/></svg></button></header>
          <div class="palette-body">
            <div class="palette-strip"><svg width="9" height="11"><path d="M.5 .5h3l5 5-5 5h-3z" fill="#e00000" stroke="#600"/></svg></div>
            <div class="palette-list">
              <button class="cmd"><svg class="icon"><use href="#i-options"/></svg>Opciones</button>
              <button class="cmd"><svg class="icon"><use href="#i-views"/></svg>Vistas</button>
              <hr class="rule">
              <button class="cmd"><svg class="icon"><use href="#i-lplus"/></svg>Introducir líneas de flexión de tendones</button>
              <button class="cmd" disabled><svg class="icon"><use href="#i-loff"/></svg>Borrar líneas de flexión de tendones</button>
              <button class="cmd"><svg class="icon"><use href="#i-ledit"/></svg>Editar líneas de flexión de tendones</button>
              <button class="cmd" disabled><svg class="icon"><use href="#i-lassign"/></svg>Asignar líneas de flexión de tendones</button>
              <hr class="rule">
              <button class="cmd cmd-on" aria-pressed="true"><svg class="icon"><use href="#i-tplus"/></svg>Introducir tendones concentrados</button>
              <button class="cmd"><svg class="icon"><use href="#i-tdist"/></svg>Introducir tendones distribuidos</button>
              <button class="cmd"><svg class="icon"><use href="#i-tdel"/></svg>Borrar tendones</button>
              <button class="cmd"><svg class="icon"><use href="#i-tedit"/></svg>Editar un tendón</button>
              <button class="cmd"><svg class="icon"><use href="#i-tassign"/></svg>Asignar tendones</button>
              <button class="cmd"><svg class="icon"><use href="#i-order"/></svg>Asignar el orden de tesado</button>
              <hr class="rule">
              <button class="cmd"><svg class="icon"><use href="#i-amove"/></svg>Mover anclajes</button>
              <button class="cmd"><svg class="icon"><use href="#i-aedit"/></svg>Editar un anclaje</button>
              <button class="cmd"><svg class="icon"><use href="#i-aassign"/></svg>Asignar anclajes a los tendones</button>
              <hr class="rule">
              <button class="cmd"><svg class="icon"><use href="#i-box"/></svg>Vista 3D</button>
            </div>
            <div class="palette-side">
              <button class="side" aria-label="Manual"><svg class="icon"><use href="#i-book"/></svg></button>
              <button class="side" aria-label="Ayuda"><svg class="icon"><use href="#i-help"/></svg></button>
            </div>
          </div>
        </section>
      </div>
      <div class="vscroll">
        <svg class="arrow" width="8" height="6"><path d="M1 5h6L4 2z" fill="#444"/></svg>
        <div class="vtrack"><div class="vthumb"><svg width="8" height="8"><path d="M0 .5h8M0 3.500h8M0 6.500h8" stroke="#555"/></svg></div></div>
        <svg class="arrow" width="8" height="6"><path d="M1 1h6L4 4z" fill="#444"/></svg>
      </div>
    </main>
    <div class="hscroll">
      <svg class="arrow" width="6" height="8"><path d="M4 1v6L1 4z" fill="#222"/></svg>
      <div class="htrack"><div class="hthumb"><svg width="8" height="8"><path d="M.5 0v7M3.500 0v7M6.500 0v7" stroke="#555"/></svg></div></div>
      <svg class="arrow" width="6" height="8"><path d="M1 1v6l3-3z" fill="#222"/></svg>
    </div>

    <nav class="tabs">
      <button class="tab"><svg class="edge" viewBox="0 0 12 13"><path d="M0 0h12v13z"/><path d="M0 0l12 12.500" class="ink"/></svg><span>Entrada de pilares</span><svg class="edge" viewBox="0 0 12 13"><path d="M0 0h12L0 13z"/><path d="M12 0L0 12.500" class="ink"/></svg></button>
      <button class="tab tab-on"><svg class="edge" viewBox="0 0 12 13"><path d="M0 0h12v13z"/><path d="M0 0l12 12.500" class="ink"/></svg><span>Entrada de vigas</span><svg class="edge" viewBox="0 0 12 13"><path d="M0 0h12L0 13z"/><path d="M12 0L0 12.500" class="ink"/></svg></button>
      <button class="tab"><svg class="edge" viewBox="0 0 12 13"><path d="M0 0h12v13z"/><path d="M0 0l12 12.500" class="ink"/></svg><span>Resultados</span><svg class="edge" viewBox="0 0 12 13"><path d="M0 0h12L0 13z"/><path d="M12 0L0 12.500" class="ink"/></svg></button>
      <button class="tab"><svg class="edge" viewBox="0 0 12 13"><path d="M0 0h12v13z"/><path d="M0 0l12 12.500" class="ink"/></svg><span>Isovalores</span><svg class="edge" viewBox="0 0 12 13"><path d="M0 0h12L0 13z"/><path d="M12 0L0 12.500" class="ink"/></svg></button>
      <button class="tab"><svg class="edge" viewBox="0 0 12 13"><path d="M0 0h12v13z"/><path d="M0 0l12 12.500" class="ink"/></svg><span>Deformada</span><svg class="edge" viewBox="0 0 12 13"><path d="M0 0h12L0 13z"/><path d="M12 0L0 12.500" class="ink"/></svg></button>
      <button class="tab"><svg class="edge" viewBox="0 0 12 13"><path d="M0 0h12v13z"/><path d="M0 0l12 12.500" class="ink"/></svg><span>Seguridad y salud</span><svg class="edge" viewBox="0 0 12 13"><path d="M0 0h12L0 13z"/><path d="M12 0L0 12.500" class="ink"/></svg></button>
    </nav>
    <footer class="status">
      <p class="status-text">Postesados - Postesados - Introducir tendones concentrados. Introduzca el primer punto.</p>
      <p class="status-floor">1: Planta baja</p>
    </footer>
  </div>
</div>
</body>
</html>
```

FILE: styles.css
```css
* { box-sizing: border-box; }
html, body { height: 100%; }
body { margin: 0; background: #fff; font: 11px/14px Lato, "Liberation Sans", sans-serif; color: #000; }
button { margin: 0; padding: 0; border: 0; background: none; font: inherit; color: inherit; }
h1, h2, p { margin: 0; font: inherit; }
.sprite { position: absolute; width: 0; height: 0; }
.icon { width: 16px; height: 16px; flex: none; }

.window {
  display: flex; flex-direction: column; height: 100vh; padding: 0 7px 7px 6px;
  background: #b9d1ea; border: 1px solid #101418; border-top: 2px solid #2b2b33;
  border-radius: 7px 7px 0 0; box-shadow: inset -1px -1px 0 #20d0ec, inset 1px 0 0 #eaf3fb; overflow: hidden;
}
.titlebar {
  display: flex; align-items: center; gap: 4px; height: 28px; margin: 0 -6px 0 -5px; padding: 4px 8px 0 8px;
  background: linear-gradient(#99b4d1, #b9d1ea); flex: none;
}
.title { flex: 1; font: 12px/16px Lato, "Open Sans", sans-serif; white-space: nowrap; }
.controls { display: flex; gap: 3px; }
.control {
  width: 30px; height: 17px; display: flex; align-items: center; justify-content: center;
  border: 1px solid #5c6c80; border-radius: 2px; background: linear-gradient(#c9d8e8 45%, #a5b9d0 50%, #bccfe2);
  box-shadow: inset 0 0 0 1px rgba(255, 255, 255, .55);
}
.control-close { border-color: #5a2020; background: linear-gradient(#e09c8e 45%, #c04530 50%, #d0705a); }

.client { flex: 1; min-height: 0; display: flex; flex-direction: column; margin-left: 1px; background: #f0f0f0; }
.menubar { display: flex; gap: 14px; height: 20px; padding-left: 4px; flex: none; font: 12px/20px Lato, "Open Sans", sans-serif; }
.menu u { text-underline-offset: 2px; }

.toolbar { display: flex; align-items: center; flex: none; overflow: hidden; }
.toolbar-main { height: 27px; border-bottom: 1px solid #a0a0a0; padding-right: 1px; }
.toolbar-beams { height: 29px; border-bottom: 2px solid #a0a0a0; }
.tool { width: 24px; height: 24px; flex: none; display: flex; align-items: center; justify-content: center; }
.tool-wide { width: 25px; }
.tool-narrow { width: 16px; overflow: hidden; }
.tool-on { background: #cfe0f2; border: 1px solid #6a8ab4; }
.tool-drop { width: 26px; }
.tool-drop::after { content: ""; border: 2px solid transparent; border-top: 3px solid #333; border-bottom: 0; margin-left: 2px; }
.sep { width: 10px; height: 22px; flex: none; background: linear-gradient(#f0f0f0, #a0a0a0 50%, #f0f0f0) center / 1px 100% no-repeat; }
.sep ~ .sep { width: 9px; }
.sep-blank { background: none; }
.spring { flex: 1; }

.workspace { flex: 1; min-height: 0; display: flex; }
.canvas { flex: 1; min-width: 0; position: relative; overflow: hidden; background: #fff; }
.plan { display: block; width: 100%; height: 100%; shape-rendering: crispEdges; }
.dim text { font: 14px "Liberation Sans", Arial, sans-serif; fill: #000080; }
.pillar text { font: 19px "Liberation Sans", Arial, sans-serif; fill: #000080; }

.vscroll { width: 16px; flex: none; display: flex; flex-direction: column; align-items: center; padding: 6px 0 6px; background: linear-gradient(90deg, #e6e6e6, #f2f2f2 40%, #f0f0f0); }
.vtrack { flex: 1; width: 100%; padding: 60px 0 56px; }
.vthumb { height: 100%; display: flex; align-items: center; justify-content: center; border: 1px solid #979797; border-radius: 1px; background: linear-gradient(90deg, #f4f4f4, #e2e2e6 45%, #c6c6ca 55%, #d8d8dc); }
.hscroll { height: 16px; flex: none; display: flex; align-items: center; padding: 0 22px 0 5px; background: linear-gradient(#e6e6e6, #f0f0f0 40%); }
.htrack { flex: 1; height: 100%; padding: 0 38% 0 15px; }
.hthumb { height: 100%; display: flex; align-items: center; justify-content: center; border: 1px solid #979797; border-radius: 1px; background: linear-gradient(#f4f4f4, #e2e2e6 45%, #c6c6ca 55%, #d8d8dc); }
.arrow { flex: none; }

.palette {
  position: absolute; left: 67px; top: 91px; width: 257px; padding: 1px 2px 2px;
  border: 1px solid #222c34; background: #f0f0f0; box-shadow: inset 1px 1px 0 #e8f4fa, inset -1px -1px 0 #5cd4ee;
}
.palette-title { display: flex; align-items: center; justify-content: space-between; height: 19px; padding: 0 2px 0 0; background: linear-gradient(#99b4d1, #b9d1ea); }
.palette-title h2 { font: 12px/18px Lato, "Open Sans", sans-serif; }
.palette-close { width: 13px; height: 13px; display: flex; align-items: center; justify-content: center; border: 1px solid #703038; border-radius: 1px; background: linear-gradient(#d09090, #a84848); }
.palette-body { display: flex; }
.palette-strip { width: 14px; padding: 2px 0 0 2px; background: linear-gradient(#e0e0e0, #666); }
.palette-strip svg { display: block; }
.palette-list { width: 213px; display: flex; flex-direction: column; padding-bottom: 2px; }
.cmd { height: 22px; display: flex; align-items: center; gap: 4px; padding-left: 3px; white-space: nowrap; text-align: left; }
.cmd:disabled { color: #a0a0a0; }
.cmd-on { height: 20px; margin: 1px 0; padding-left: 2px; border: 1px solid #444; border-radius: 3px; background: linear-gradient(#d0d0d0, #f0f0f0 40%, #e6e6e6); }
.rule { width: 211px; height: 1px; margin: 2px 0 5px 1px; border: 0; background: #888; }
.palette-side { flex: 1; padding-left: 4px; }
.side { display: flex; align-items: center; height: 22px; }

.tabs { display: flex; height: 14px; padding-left: 2px; border-top: 1px solid #000; flex: none; }
.tab { display: flex; height: 14px; margin-top: -1px; margin-right: -12px; fill: #f0f0f0; position: relative; }
.tab span { height: 14px; padding: 0 5px 0 3px; border-top: 1px solid #000; border-bottom: 1px solid #000; line-height: 12px; background: #f0f0f0; }
.tab-on { z-index: 1; fill: #fff; }
.tab-on span { background: #fff; border-top-color: #fff; }
.edge { width: 12px; height: 14px; display: block; }
.edge .ink { fill: none; stroke: #000; }
.status { display: flex; align-items: center; height: 20px; padding: 2px 1px 0 3px; flex: none; }
.status-text { flex: 1; }
.status-floor { width: 129px; height: 17px; padding: 1px 3px; border: 1px solid #a0a0a0; border-right-color: #fff; border-bottom-color: #fff; }
```
